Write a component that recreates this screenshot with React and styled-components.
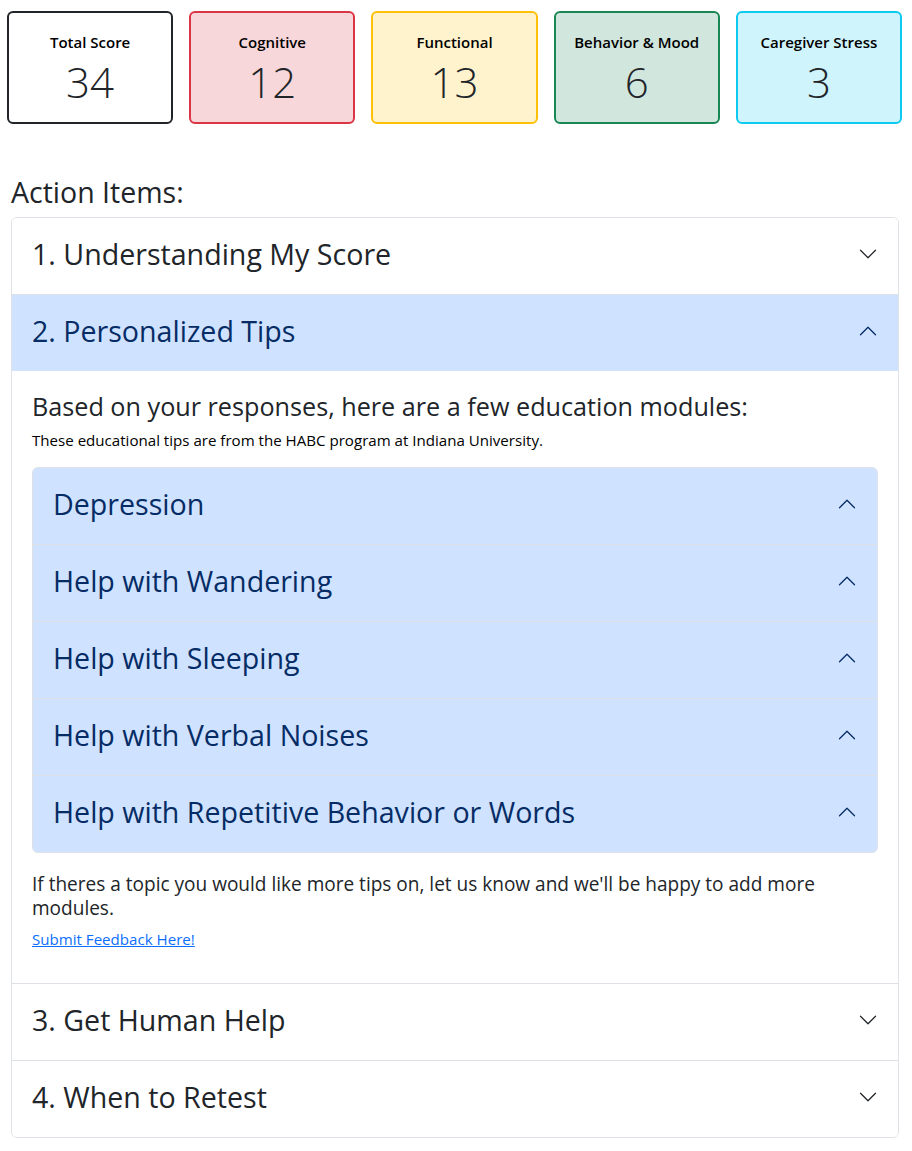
import React from "react";
import styled, { createGlobalStyle } from "styled-components";

const Global = createGlobalStyle`
  html, body { margin: 0; padding: 0; background: #fff; }
  body {
    font-family: "Open Sans", "Noto Sans", Arial, sans-serif;
    color: #212529;
    -webkit-font-smoothing: antialiased;
  }
  * { box-sizing: border-box; }
`;

const Page = styled.div`
  width: 912px;
  padding-top: 11px;
`;

const ScoreRow = styled.div`
  display: grid;
  grid-template-columns: repeat(5, 1fr);
  gap: 16px;
  padding: 0 10px 0 7px;
`;

const ScoreCard = styled.div`
  height: 113px;
  border: 2px solid ${(p) => p.$border};
  background: ${(p) => p.$bg};
  border-radius: 6px;
  padding-top: 18px;
  display: flex;
  flex-direction: column;
  align-items: center;
`;

const ScoreLabel = styled.div`
  font-size: 15px;
  font-weight: 600;
  line-height: 22px;
  color: #000;
`;

const ScoreValue = styled.div`
  margin-top: 4px;
  font-size: 42px;
  font-weight: 300;
  line-height: 50px;
  color: #212529;
`;

const Section = styled.div`
  padding: 0 13px 0 11px;
`;

const SectionTitle = styled.h3`
  margin: 51px 0 8px;
  font-size: 28.5px;
  font-weight: 400;
  line-height: 34px;
  color: #212529;
`;

const Accordion = styled.div`
  border: 1px solid #dee2e6;
  border-radius: 6px;
  overflow: hidden;
  background: ${(p) => (p.$inner ? "#cfe2ff" : "#fff")};
`;

const Item = styled.div`
  & + & {
    border-top: 1px solid #dee2e6;
  }
`;

const Header = styled.button`
  display: flex;
  align-items: center;
  width: 100%;
  height: 76px;
  padding: 0 20px 5px;
  border: 0;
  margin: 0;
  background: ${(p) => (p.$active ? "#cfe2ff" : "#fff")};
  color: ${(p) => (p.$active ? "#052c65" : "#212529")};
  font-family: inherit;
  font-size: 28.6px;
  font-weight: 400;
  text-align: left;
  cursor: pointer;
`;

const HeaderText = styled.span`
  flex: 1;
`;

const Chevron = styled.svg`
  width: 20px;
  height: 20px;
  flex-shrink: 0;
  transform: ${(p) => (p.$up ? "rotate(180deg)" : "none")};
`;

const Body = styled.div`
  padding: 20px 20px 33px;
`;

const BodyTitle = styled.h4`
  margin: 0;
  font-size: 25.2px;
  font-weight: 400;
  line-height: 30px;
  color: #212529;
`;

const Small = styled.p`
  margin: 8px 0 0;
  font-size: 15.1px;
  line-height: 22px;
  color: #000;
`;

const InnerWrap = styled.div`
  margin-top: 16px;
`;

const Note = styled.p`
  margin: 19px 0 0;
  font-size: 19.05px;
  line-height: 24px;
  color: #212529;
`;

const Link = styled.a`
  display: inline-block;
  margin-top: 8px;
  font-size: 15.1px;
  line-height: 22px;
  color: #0d6efd;
  text-decoration: underline;
`;

const ChevronIcon = ({ up, color }) => (
  <Chevron $up={up} viewBox="0 0 16 16" fill="none">
    <path
      d="M2 5L8 11L14 5"
      stroke={color}
      strokeWidth="1"
      strokeLinecap="round"
      strokeLinejoin="round"
    />
  </Chevron>
);

const AccHeader = ({ title, active }) => (
  <Header $active={active}>
    <HeaderText>{title}</HeaderText>
    <ChevronIcon up={active} color={active ? "#052c65" : "#212529"} />
  </Header>
);

const scores = [
  { label: "Total Score", value: 34, border: "#212529", bg: "#fff" },
  { label: "Cognitive", value: 12, border: "#dc3545", bg: "#f8d7da" },
  { label: "Functional", value: 13, border: "#ffc107", bg: "#fff3cd" },
  { label: "Behavior & Mood", value: 6, border: "#198754", bg: "#d1e7dd" },
  { label: "Caregiver Stress", value: 3, border: "#0dcaf0", bg: "#cff4fc" },
];

const modules = [
  "Depression",
  "Help with Wandering",
  "Help with Sleeping",
  "Help with Verbal Noises",
  "Help with Repetitive Behavior or Words",
];

export default function App() {
  return (
    <Page>
      <Global />
      <ScoreRow>
        {scores.map((s) => (
          <ScoreCard key={s.label} $border={s.border} $bg={s.bg}>
            <ScoreLabel>{s.label}</ScoreLabel>
            <ScoreValue>{s.value}</ScoreValue>
          </ScoreCard>
        ))}
      </ScoreRow>
      <Section>
        <SectionTitle>Action Items:</SectionTitle>
        <Accordion>
          <Item>
            <AccHeader title="1. Understanding My Score" />
          </Item>
          <Item>
            <AccHeader title="2. Personalized Tips" active />
            <Body>
              <BodyTitle>
                Based on your responses, here are a few education modules:
              </BodyTitle>
              <Small>
                These educational tips are from the HABC program at Indiana
                University.
              </Small>
              <InnerWrap>
                <Accordion $inner>
                  {modules.map((m) => (
                    <Item key={m}>
                      <AccHeader title={m} active />
                    </Item>
                  ))}
                </Accordion>
              </InnerWrap>
              <Note>
                If theres a topic you would like more tips on, let us know and
                we'll be happy to add more modules.
              </Note>
              <Link href="#">Submit Feedback Here!</Link>
            </Body>
          </Item>
          <Item>
            <AccHeader title="3. Get Human Help" />
          </Item>
          <Item>
            <AccHeader title="4. When to Retest" />
          </Item>
        </Accordion>
      </Section>
    </Page>
  );
}
